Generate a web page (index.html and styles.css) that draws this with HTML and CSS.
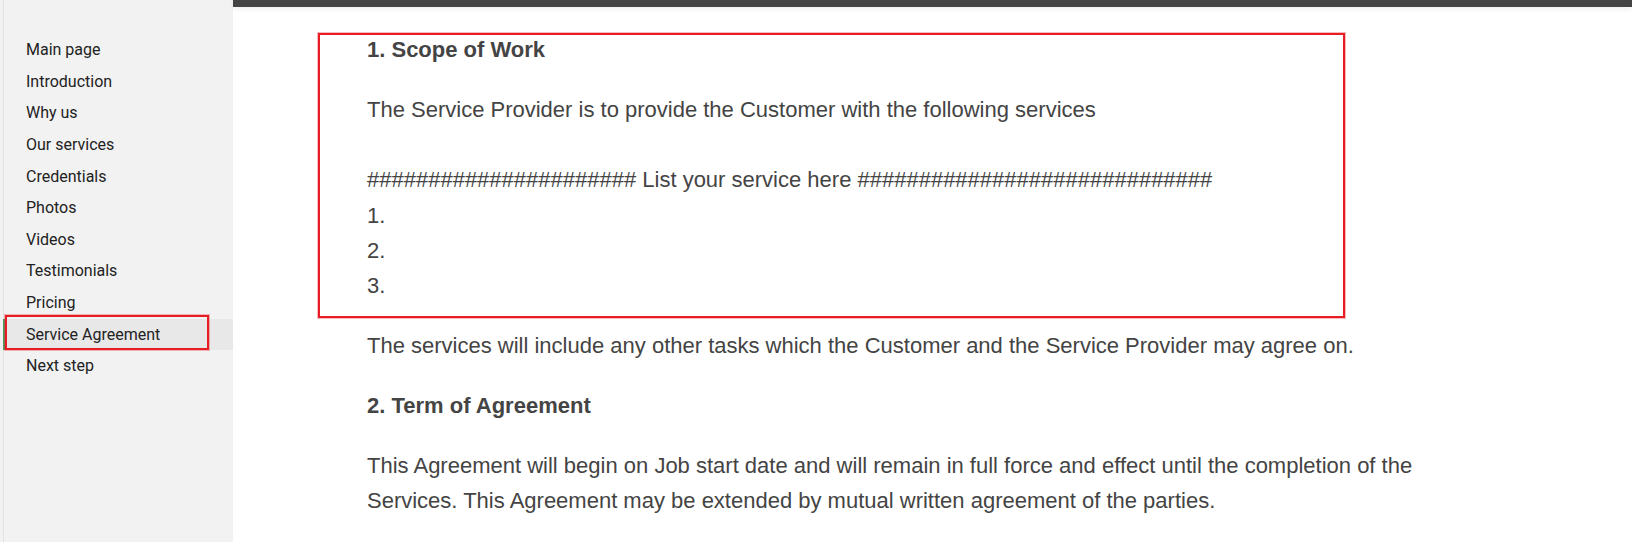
FILE: index.html
```html
<!DOCTYPE html>
<html lang="en">
<head>
<meta charset="utf-8">
<title>Service Agreement</title>
<link rel="stylesheet" href="styles.css">
</head>
<body>
<aside class="sidebar">
  <nav class="nav">
    <a class="nav-item">Main page</a>
    <a class="nav-item">Introduction</a>
    <a class="nav-item">Why us</a>
    <a class="nav-item">Our services</a>
    <a class="nav-item">Credentials</a>
    <a class="nav-item">Photos</a>
    <a class="nav-item">Videos</a>
    <a class="nav-item">Testimonials</a>
    <a class="nav-item">Pricing</a>
    <a class="nav-item active">Service Agreement</a>
    <a class="nav-item">Next step</a>
  </nav>
  <div class="highlight highlight-nav"></div>
</aside>
<main class="main">
  <div class="topbar"></div>
  <article class="content">
    <h3 class="section-title">1. Scope of Work</h3>
    <p>The Service Provider is to provide the Customer with the following services<br><br>###################### List your service here #############################<br>1.<br>2.<br>3.</p>
    <p>The services will include any other tasks which the Customer and the Service Provider may agree on.</p>
    <h3 class="section-title">2. Term of Agreement</h3>
    <p>This Agreement will begin on Job start date and will remain in full force and effect until the completion of the Services. This Agreement may be extended by mutual written agreement of the parties.</p>
  </article>
  <div class="highlight highlight-main"></div>
</main>
</body>
</html>
```

FILE: styles.css
```css
html, body {
  margin: 0;
  padding: 0;
}

body {
  display: flex;
  height: 542px;
  overflow: hidden;
  background: #ffffff;
}

.sidebar {
  position: relative;
  width: 233px;
  flex: 0 0 233px;
  background: #f2f2f2;
  padding-left: 3px;
  box-sizing: border-box;
}

.nav {
  display: flex;
  flex-direction: column;
  height: 100%;
  padding-top: 34px;
  box-sizing: border-box;
  background: linear-gradient(#e1e1e1, #e1e1e1) left top / 1px 100% no-repeat;
}

.nav-item {
  display: block;
  height: 31.64px;
  line-height: 32px;
  padding-left: 21px;
  border-left: 2px solid transparent;
  font-family: Roboto, "Noto Sans", sans-serif;
  font-size: 16px;
  color: #222222;
  text-decoration: none;
  white-space: nowrap;
}

.nav-item.active {
  background: #e8e8e8;
  border-left-color: #4c9a5e;
}

.main {
  position: relative;
  flex: 1 1 auto;
  background: #ffffff;
}

.topbar {
  height: 7px;
  background: #444444;
  box-shadow: 0 2px 5px rgba(0, 0, 0, 0.07);
}

.content {
  margin-left: 134px;
  width: 1100px;
  padding-top: 25px;
  font-family: "Liberation Sans", Arial, sans-serif;
  font-size: 22px;
  line-height: 1.6;
  color: #444444;
}

.section-title {
  margin: 0 0 24.8px;
  font-size: 22px;
  font-weight: bold;
}

.content p {
  margin: 0 0 24.8px;
}

.highlight {
  position: absolute;
  border: 2px solid #e81c24;
  box-shadow: 0 0 0 1px rgba(232, 28, 36, 0.3);
  box-sizing: border-box;
  pointer-events: none;
}

.highlight-nav {
  left: 5px;
  top: 315px;
  width: 204px;
  height: 35px;
}

.highlight-main {
  left: 85px;
  top: 33px;
  width: 1027px;
  height: 285px;
}
```
